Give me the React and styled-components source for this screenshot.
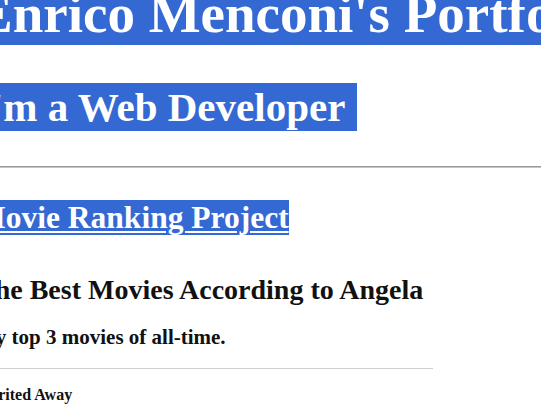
import React from 'react';
import styled, { createGlobalStyle } from 'styled-components';

const GlobalStyle = createGlobalStyle`
  html, body {
    margin: 0;
    padding: 0;
    background: #ffffff;
    overflow: hidden;
  }
  body {
    font-family: "Liberation Serif", "Times New Roman", serif;
    color: #000000;
  }
`;

const Page = styled.div`
  margin: -18px 0 0 -24px;
  width: calc(100% + 60px);
`;

const Title = styled.h1`
  font-size: 55px;
  font-weight: bold;
  margin: 0 0 38px 0;
  white-space: nowrap;
`;

const Subtitle = styled.h2`
  font-size: 41px;
  font-weight: bold;
  margin: 38px 0 35px 0;
  white-space: nowrap;
`;

const Highlight = styled.span`
  background: #3469d3;
  color: #ffffff;
  padding: 1px ${props => props.$trail || 0}px 1px 0;
`;

const Divider = styled.hr`
  margin: 0;
  border: none;
  border-top: 1px solid #9a9a9a;
  border-bottom: 1px solid #c4c4c4;
`;

const ProjectHeading = styled.h3`
  font-size: 31.5px;
  font-weight: bold;
  margin: 32px 0 0 0;
`;

const ProjectLink = styled.a`
  background: #3469d3;
  color: #ffffff;
  text-decoration: underline;
  text-decoration-thickness: 2px;
  text-underline-offset: 3px;
`;

const Preview = styled.div`
  width: 457px;
  padding-top: 38px;
  color: #111111;
`;

const PreviewTitle = styled.h1`
  font-size: 28px;
  font-weight: bold;
  margin: 0 0 19px 0;
  white-space: nowrap;
`;

const PreviewSubtitle = styled.h2`
  font-size: 21px;
  font-weight: bold;
  margin: 0 0 18px 0;
`;

const PreviewDivider = styled.hr`
  margin: 0;
  border: none;
  border-top: 1px solid #cfcfcf;
`;

const MovieName = styled.h3`
  font-size: 16px;
  font-weight: bold;
  margin: 17px 0 0 0;
`;

const App = () => {
  return (
    <>
      <GlobalStyle />
      <Page>
        <Title>
          <Highlight>Enrico Menconi's Portfolio</Highlight>
        </Title>
        <Subtitle>
          <Highlight $trail={12}>I'm a Web Developer</Highlight>
        </Subtitle>
        <Divider />
        <ProjectHeading>
          <ProjectLink href="#">Movie Ranking Project</ProjectLink>
        </ProjectHeading>
        <Preview>
          <PreviewTitle>The Best Movies According to Angela</PreviewTitle>
          <PreviewSubtitle>My top 3 movies of all-time.</PreviewSubtitle>
          <PreviewDivider />
          <MovieName>Spirited Away</MovieName>
        </Preview>
      </Page>
    </>
  );
};

export default App;
